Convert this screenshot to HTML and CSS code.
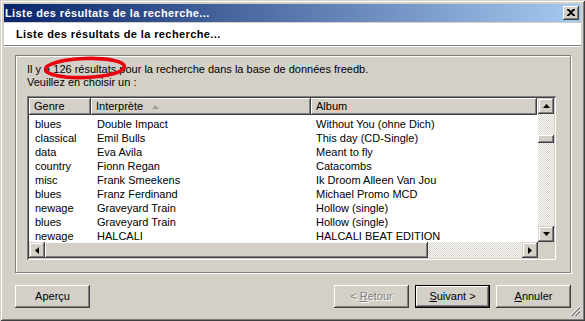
FILE: index.html
```html
<!DOCTYPE html>
<html lang="fr">
<head>
    <meta charset="UTF-8">
    <title>Liste des résultats de la recherche...</title>
    <link rel="stylesheet" href="styles.css">
</head>
<body>
    <div class="window">
        <div class="titlebar">
            <span>Liste des résultats de la recherche...</span>
            <div class="close">
                <svg width="8" height="7" viewBox="0 0 8 7"><path d="M0 0h2l2 2 2-2h2v1l-3 2.5 3 2.5v1h-2l-2-2-2 2h-2v-1l3-2.5-3-2.5z" fill="#000"/></svg>
            </div>
        </div>

        <div class="header">Liste des résultats de la recherche...</div>

        <div class="content">
            <div class="group">
                <p class="intro">Il y a 126 résultats pour la recherche dans la base de données freedb.<br>Veuillez en choisir un :</p>
                <svg class="mark" width="86" height="24" viewBox="0 0 86 24"><ellipse cx="42" cy="12" rx="39.5" ry="9.5" transform="rotate(-2 42 12)" fill="none" stroke="#e8000c" stroke-width="3.6"/></svg>

                <div class="list">
                    <div class="list-main">
                        <div class="table">
                            <div class="row head">
                                <div class="hcell">Genre</div>
                                <div class="hcell">Interprète <svg class="sort" width="7" height="4" viewBox="0 0 7 4"><path d="M3.5 0L7 4H0z" fill="#a0a0a0"/></svg></div>
                                <div class="hcell">Album</div>
                            </div>
                            <div class="row"><span>blues</span><span>Double Impact</span><span>Without You (ohne Dich)</span></div>
                            <div class="row"><span>classical</span><span>Emil Bulls</span><span>This day (CD-Single)</span></div>
                            <div class="row"><span>data</span><span>Eva Avila</span><span>Meant to fly</span></div>
                            <div class="row"><span>country</span><span>Fionn Regan</span><span>Catacombs</span></div>
                            <div class="row"><span>misc</span><span>Frank Smeekens</span><span>Ik Droom Alleen Van Jou</span></div>
                            <div class="row"><span>blues</span><span>Franz Ferdinand</span><span>Michael Promo MCD</span></div>
                            <div class="row"><span>newage</span><span>Graveyard Train</span><span>Hollow (single)</span></div>
                            <div class="row"><span>blues</span><span>Graveyard Train</span><span>Hollow (single)</span></div>
                            <div class="row"><span>newage</span><span>HALCALI</span><span>HALCALI BEAT EDITION</span></div>
                        </div>
                        <div class="vscroll">
                            <div class="sbtn"><svg width="7" height="4" viewBox="0 0 7 4"><path d="M3.5 0L7 4H0z"/></svg></div>
                            <div class="track">
                                <div class="vthumb"></div>
                            </div>
                            <div class="sbtn"><svg width="7" height="4" viewBox="0 0 7 4"><path d="M0 0h7L3.5 4z"/></svg></div>
                        </div>
                    </div>
                    <div class="hscroll-row">
                        <div class="hscroll">
                            <div class="sbtn"><svg width="4" height="7" viewBox="0 0 4 7"><path d="M4 0v7L0 3.5z"/></svg></div>
                            <div class="hthumb"></div>
                            <div class="track"></div>
                            <div class="sbtn"><svg width="4" height="7" viewBox="0 0 4 7"><path d="M0 0v7l4-3.5z"/></svg></div>
                        </div>
                        <div class="corner"></div>
                    </div>
                </div>
            </div>

            <div class="buttons">
                <div class="btn"><span>Aperçu</span></div>
                <div class="spacer"></div>
                <div class="btn disabled"><span>&lt; <u>R</u>etour</span></div>
                <div class="btn default"><span><u>S</u>uivant &gt;</span></div>
                <div class="btn"><span><u>A</u>nnuler</span></div>
            </div>
        </div>

        <svg class="grip" width="12" height="12" viewBox="0 0 12 12">
            <path d="M11 1L1 11M11 5L5 11M11 9L9 11" stroke="#fff" stroke-width="1"/>
            <path d="M11 2L2 11M11 3L3 11M11 6L6 11M11 7L7 11M11 10L10 11" stroke="#808080" stroke-width="1"/>
        </svg>
    </div>
</body>
</html>
```

FILE: styles.css
```css
body {
    margin: 0;
    background: #d4d0c8;
    font-family: "Liberation Sans", Arial, sans-serif;
    font-size: 11px;
    color: #000;
}
.window {
    position: relative;
    width: 585px;
    height: 321px;
    box-sizing: border-box;
    padding: 4px;
    background: #d4d0c8;
    box-shadow: inset 1px 1px #d4d0c8, inset -1px -1px #404040, inset 2px 2px #fff, inset -2px -2px #808080;
    display: flex;
    flex-direction: column;
}
.titlebar {
    height: 18px;
    background: linear-gradient(90deg, #0a246a, #a6caf0);
    color: #fff;
    font-weight: bold;
    letter-spacing: 0.4px;
    display: flex;
    align-items: center;
    justify-content: space-between;
    padding: 0 2px 0 1px;
}
.close {
    width: 16px;
    height: 14px;
    box-sizing: border-box;
    background: #d4d0c8;
    box-shadow: inset -1px -1px #404040, inset 1px 1px #fff, inset -2px -2px #808080;
    display: flex;
    align-items: center;
    justify-content: center;
    padding: 0 1px 1px 0;
}
.header {
    margin-top: 1px;
    height: 22px;
    background: #fff;
    border-bottom: 1px solid #808080;
    box-shadow: 0 1px #fff;
    font-weight: bold;
    letter-spacing: 0.4px;
    padding-left: 12px;
    line-height: 22px;
}
.content {
    flex: 1;
    padding: 9px 10px 0 11px;
}
.group {
    position: relative;
    height: 218px;
    box-sizing: border-box;
    border: 1px solid #808080;
    box-shadow: inset 1px 1px #fff, 1px 1px #fff;
    padding: 7px 14px 0 11px;
}
.intro {
    margin: 0;
    line-height: 13px;
}
.mark {
    position: absolute;
    left: 27px;
    top: 0;
}
.list {
    margin-top: 7px;
    padding: 2px;
    background: #fff;
    box-shadow: inset 1px 1px #808080, inset -1px -1px #fff, inset 2px 2px #404040, inset -2px -2px #d4d0c8;
}
.list-main {
    display: flex;
    height: 144px;
}
.table {
    flex: 1;
    overflow: hidden;
}
.row {
    display: grid;
    grid-template-columns: 62px 220px 226px;
    height: 14px;
    line-height: 14px;
    white-space: nowrap;
}
.row span {
    padding: 2px 0 0 6px;
}
.row span:nth-child(3) {
    padding-left: 5px;
}
.row.head {
    height: 17px;
}
.hcell {
    background: #d4d0c8;
    line-height: 17px;
    padding-left: 5px;
    box-shadow: inset -1px -1px #404040, inset 1px 1px #fff, inset -2px -2px #808080;
    display: flex;
    align-items: center;
}
.sort {
    margin-left: 9px;
}
.vscroll {
    width: 16px;
    display: flex;
    flex-direction: column;
}
.track {
    flex: 1;
    background: repeating-conic-gradient(#fff 0 25%, #d4d0c8 0 50%) 0 0 / 2px 2px;
}
.vthumb {
    margin-top: 21px;
    height: 8px;
    background: #d4d0c8;
    box-shadow: inset -1px -1px #404040, inset 1px 1px #fff, inset -2px -2px #808080;
}
.sbtn {
    width: 16px;
    height: 16px;
    flex: none;
    background: #d4d0c8;
    box-shadow: inset -1px -1px #404040, inset 1px 1px #d4d0c8, inset -2px -2px #808080, inset 2px 2px #fff;
    display: flex;
    align-items: center;
    justify-content: center;
}
.hscroll-row {
    display: flex;
    height: 16px;
}
.hscroll {
    flex: 1;
    display: flex;
}
.hthumb {
    width: 383px;
    background: #d4d0c8;
    box-shadow: inset -1px -1px #404040, inset 1px 1px #fff, inset -2px -2px #808080;
}
.corner {
    width: 16px;
    background: #d4d0c8;
}
.buttons {
    display: flex;
    gap: 6px;
    margin-top: 12px;
}
.spacer {
    flex: 1;
}
.btn {
    width: 75px;
    height: 23px;
    box-sizing: border-box;
    background: #d4d0c8;
    box-shadow: inset -1px -1px #404040, inset 1px 1px #fff, inset -2px -2px #808080;
    display: flex;
    align-items: center;
    justify-content: center;
    padding-bottom: 1px;
    white-space: pre;
}
.btn.default {
    border: 1px solid #000;
}
.btn.disabled {
    color: #808080;
    text-shadow: 1px 1px #fff;
}
.grip {
    position: absolute;
    right: 4px;
    bottom: 4px;
}
```
